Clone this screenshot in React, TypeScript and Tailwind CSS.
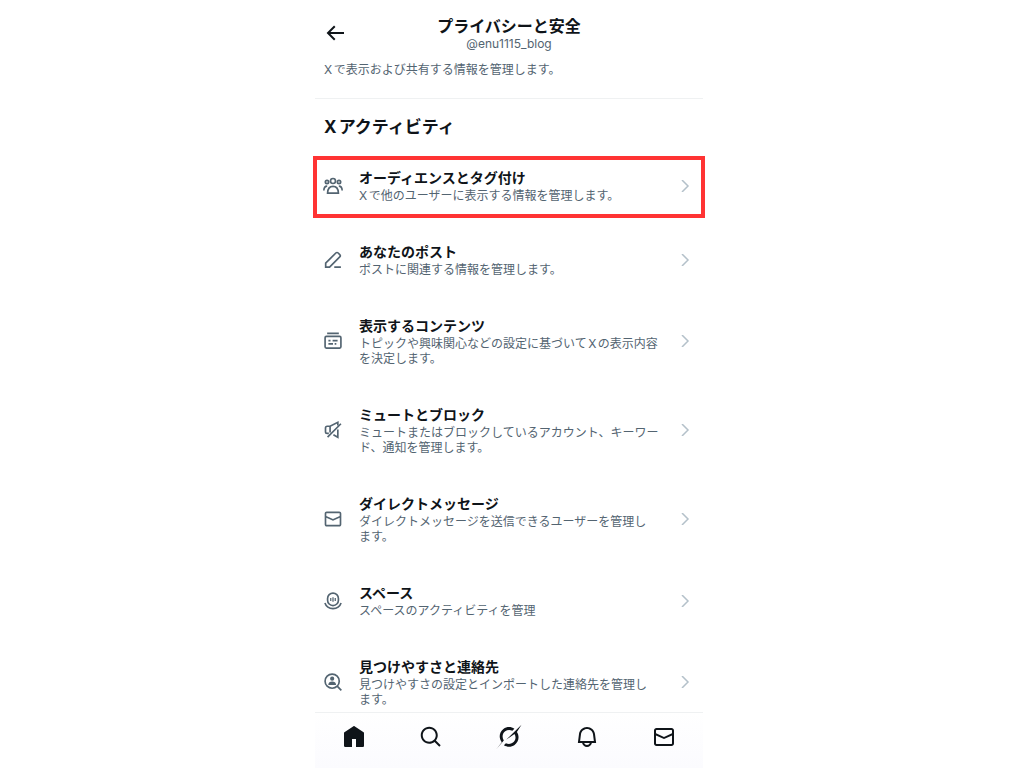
import type { ReactNode } from 'react'

type SettingItem = {
  id: string
  title: string
  description: string
  icon: ReactNode
  highlighted?: boolean
}

const MAIL_PATH =
  'M1.998 5.5c0-1.381 1.119-2.5 2.5-2.5h15c1.381 0 2.5 1.119 2.5 2.5v13c0 1.381-1.119 2.5-2.5 2.5h-15c-1.381 0-2.5-1.119-2.5-2.5v-13zm2.5-.5c-.276 0-.5.224-.5.5v2.764l8 3.638 8-3.636V5.5c0-.276-.224-.5-.5-.5h-15zm15.5 5.463l-8 3.636-8-3.638V18.5c0 .276.224.5.5.5h15c.276 0 .5-.224.5-.5v-8.037z'

const items: SettingItem[] = [
  {
    id: 'audience',
    title: 'オーディエンスとタグ付け',
    description: 'Xで他のユーザーに表示する情報を管理します。',
    highlighted: true,
    icon: (
      <>
        <circle cx="12" cy="6" r="3" />
        <circle cx="4.8" cy="7.2" r="2" />
        <circle cx="19.2" cy="7.2" r="2" />
        <path d="M5.500 20.500c.2-5.200 2.500-8 6.500-8s6.300 2.800 6.500 8z" />
        <path d="M1 17.500c.1-3.400 1.300-5.300 4-5.300M23 17.500c-.1-3.400-1.300-5.300-4-5.300" />
      </>
    ),
  },
  {
    id: 'posts',
    title: 'あなたのポスト',
    description: 'ポストに関連する情報を管理します。',
    icon: (
      <path d="M3.200 20.500v-4.700L15.400 3.600c.8-.8 2-.8 2.800 0l1.900 1.900c.8.8.8 2 0 2.800L7.900 20.500zM13.500 20.500h8" />
    ),
  },
  {
    id: 'content',
    title: '表示するコンテンツ',
    description: 'トピックや興味関心などの設定に基づいてXの表示内容\nを決定します。',
    icon: (
      <>
        <rect x="2.500" y="6.500" width="19" height="14" rx="1.500" />
        <path d="M5 2.800h14M6.500 11.500h2.500M11.500 11.500h6M6.500 15.500h5.500M14 15.500h2" />
      </>
    ),
  },
  {
    id: 'mute',
    title: 'ミュートとブロック',
    description: 'ミュートまたはブロックしているアカウント、キーワー\nド、通知を管理します。',
    icon: (
      <>
        <path d="M17.800 6.500V2.800L8.500 7.500H5c-1.100 0-2 .9-2 2v4.500c0 1.100.9 2 2 2h2" />
        <path d="M8.500 7.500V15M17.800 11.500v9.300l-5.300-3M21.500 4.500L5.500 20.500" />
      </>
    ),
  },
  {
    id: 'dm',
    title: 'ダイレクトメッセージ',
    description: 'ダイレクトメッセージを送信できるユーザーを管理し\nます。',
    icon: <path fill="currentColor" stroke="none" d={MAIL_PATH} />,
  },
  {
    id: 'spaces',
    title: 'スペース',
    description: 'スペースのアクティビティを管理',
    icon: (
      <>
        <rect x="5.500" y="2.500" width="13" height="15" rx="6.500" />
        <path d="M2.300 14.500c1.500 4.300 5 6.700 9.700 6.700s8.200-2.400 9.700-6.700" />
        <path strokeWidth="1.500" d="M9.300 8.500v3.500M12 7.500v5.500M14.700 8.500v3.500" />
      </>
    ),
  },
  {
    id: 'discoverability',
    title: '見つけやすさと連絡先',
    description: '見つけやすさの設定とインポートした連絡先を管理し\nます。',
    icon: (
      <>
        <circle cx="11" cy="11" r="8.500" />
        <path d="M17 17l5 5" />
        <circle cx="11" cy="8" r="2.500" fill="currentColor" stroke="none" />
        <path fill="currentColor" stroke="none" d="M6.300 15.500c.3-2.900 2-4 4.700-4s4.400 1.100 4.700 4z" />
      </>
    ),
  },
]

const tabs = [
  {
    label: 'ホーム',
    icon: (
      <path d="M21.591 7.146L12.520 1.157c-.316-.21-.724-.21-1.040 0l-9.071 5.990c-.26.173-.409.456-.409.757v13.183c0 .502.418.913.929.913H10v-8h4v8h7.071c.51 0 .929-.41.929-.913V7.904c0-.301-.149-.584-.409-.758z" />
    ),
  },
  {
    label: '検索',
    icon: (
      <path d="M10.250 3.750c-3.590 0-6.500 2.910-6.500 6.500s2.910 6.500 6.500 6.500c1.795 0 3.419-.726 4.596-1.904 1.178-1.177 1.904-2.801 1.904-4.596 0-3.590-2.910-6.500-6.500-6.500zm-8.500 6.500c0-4.694 3.806-8.500 8.500-8.500s8.500 3.806 8.500 8.500c0 1.986-.682 3.815-1.824 5.262l4.781 4.781-1.414 1.414-4.781-4.781c-1.447 1.142-3.276 1.824-5.262 1.824-4.694 0-8.500-3.806-8.500-8.500z" />
    ),
  },
  {
    label: 'Grok',
    icon: (
      <>
        <path d="M4.800 17.200C1.300 12.600 2.400 6.900 6.400 4c3.400-2.500 7.700-2.400 11-.3l-2 2.100C13 4.500 10.300 4.700 8.200 6.300c-2.900 2.200-3.400 6.200-1.400 9.100L-.5 24z" />
        <path d="M9.200 14.800L24.500-.2l-4.600 7.200c3 4.500 1.700 10-2.300 12.900-3.300 2.400-7.500 2.300-10.700.3l2-2c2.300 1.200 5 1 7.100-.6 2.700-2 3.300-5.700 1.500-8.700z" />
      </>
    ),
  },
  {
    label: '通知',
    icon: (
      <path d="M19.993 9.042C19.480 5.017 16.054 2 11.996 2s-7.490 3.021-7.999 7.051L2.866 18H7.100c.463 2.282 2.481 4 4.900 4s4.437-1.718 4.900-4h4.236l-1.143-8.958zM12 20c-1.306 0-2.417-.835-2.829-2h5.658c-.412 1.165-1.523 2-2.829 2zm-6.866-4l.847-6.698C6.364 6.272 8.941 4 11.996 4s5.627 2.268 6.013 5.295L18.864 16H5.134z" />
    ),
  },
  { label: 'メッセージ', icon: <path d={MAIL_PATH} /> },
]

function SettingRow({ item }: { item: SettingItem }) {
  return (
    <li className="relative">
      <button className="flex w-full items-center pt-5 pr-3 pb-[19px] pl-2 text-left">
        <svg
          className="size-5 shrink-0 text-[#536471]"
          viewBox="0 0 24 24"
          fill="none"
          stroke="currentColor"
          strokeWidth="2"
          aria-hidden="true"
        >
          {item.icon}
        </svg>
        <span className="ml-4 min-w-0 flex-1">
          <span className="block text-[14px] leading-5 font-bold">{item.title}</span>
          <span className="block text-[12px] leading-[15px] whitespace-pre-line text-[#536471]">
            {item.description}
          </span>
        </span>
        <svg
          className="h-3 w-3 shrink-0 text-[#b4c1ca]"
          viewBox="0 0 12 12"
          fill="none"
          stroke="currentColor"
          strokeWidth="1.500"
          aria-hidden="true"
        >
          <path d="M3 0L9 6L3 12" />
        </svg>
      </button>
      {item.highlighted && (
        <div className="pointer-events-none absolute -inset-x-0.5 top-2 bottom-1 border-4 border-[#ff3333]" />
      )}
    </li>
  )
}

export default function App() {
  return (
    <div
      className="h-dvh bg-white pr-1.5 font-['Inter','Noto_Sans_CJK_JP',sans-serif] text-[#0f1419] [text-autospace:normal]"
      lang="ja"
    >
      <div className="mx-auto flex h-full max-w-[388px] flex-col">
        <header className="grid shrink-0 grid-cols-[40px_1fr_40px] items-center pt-4 pb-2">
          <button aria-label="戻る" className="flex justify-center pb-0.5">
            <svg className="size-6" viewBox="0 0 24 24" fill="currentColor">
              <path d="M7.414 13l5.043 5.040-1.414 1.420L3.586 12l7.457-7.460 1.414 1.420L7.414 11H21v2H7.414z" />
            </svg>
          </button>
          <div className="text-center">
            <h1 className="text-[16px] leading-5 font-bold">プライバシーと安全</h1>
            <p className="text-[12px] leading-4 text-[#536471]">@enu1115_blog</p>
          </div>
        </header>

        <main className="min-h-0 flex-1 [clip-path:inset(0_-4px)]">
          <p className="border-b border-[#eff1f2] px-[9px] pt-0.5 pb-[21px] text-[12px] leading-[15px] text-[#536471]">
            Xで表示および共有する情報を管理します。
          </p>
          <h2 className="px-[9px] pt-4 pb-[9px] text-[17px] leading-6 font-bold">Xアクティビティ</h2>
          <ul>
            {items.map((item) => (
              <SettingRow key={item.id} item={item} />
            ))}
          </ul>
        </main>

        <nav className="relative flex h-14 shrink-0 justify-around border-t border-[#eff1f2] bg-linear-to-b from-white to-[#fbfbfe] pt-3">
          {tabs.map((tab) => (
            <button key={tab.label} aria-label={tab.label} className="flex flex-1 justify-center">
              <svg className="size-6 overflow-visible" viewBox="0 0 24 24" fill="currentColor">
                {tab.icon}
              </svg>
            </button>
          ))}
        </nav>
      </div>
    </div>
  )
}
